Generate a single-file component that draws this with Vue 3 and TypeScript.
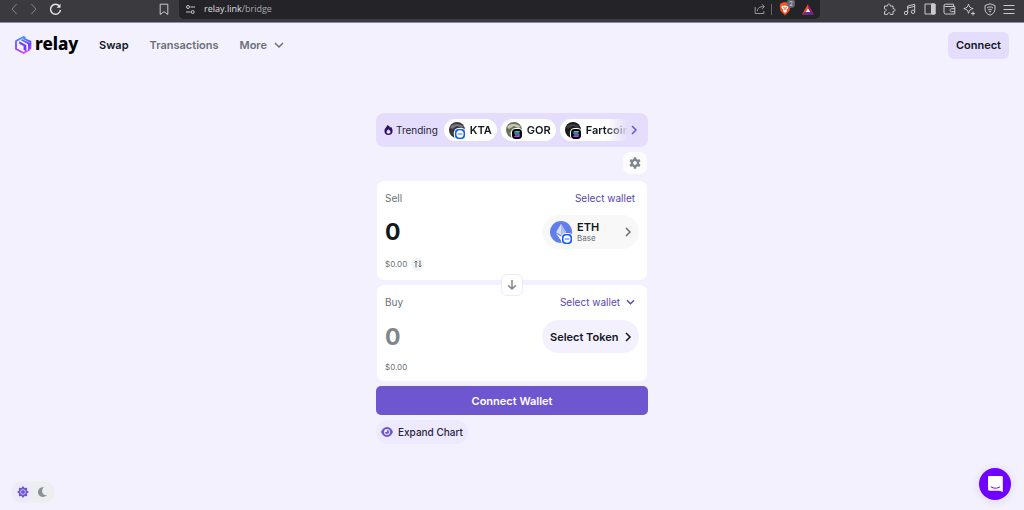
<script setup lang="ts">
import { ref } from 'vue'

interface Token {
  name: string
  chain: 'base' | 'solana'
  shade: string
  accent: string
}

const tokens: Token[] = [
  { name: 'KTA', chain: 'base', shade: '#37373c', accent: '#77777c' },
  { name: 'GOR', chain: 'solana', shade: '#687258', accent: '#c5c8b8' },
  { name: 'Fartcoin', chain: 'solana', shade: '#18191c', accent: '#3b3c42' },
]

const sellAmount = ref('0')
const buyAmount = ref('0')
const dark = ref(false)
</script>

<template>
  <div class="page">
    <div class="browser">
      <div class="tools-left">
        <button class="plain dim" aria-label="Back"><svg width="8" height="12" viewBox="0 0 8 12"><path d="M6.500 1 2 6l4.500 5" /></svg></button>
        <button class="plain dim" aria-label="Forward"><svg width="8" height="12" viewBox="0 0 8 12"><path d="M1.500 1 6 6l-4.500 5" /></svg></button>
        <button class="plain reload" aria-label="Reload"><svg width="13" height="13" viewBox="0 0 13 13"><path d="M10.500 3.200A5 5 0 1 0 11.500 7" stroke-width="1.500" /><path d="M11.500.8v4H7.600z" fill="currentColor" stroke="none" /></svg></button>
        <button class="plain bookmark" aria-label="Bookmark"><svg width="10" height="13" viewBox="0 0 10 13"><path d="M1.200 1.200h7.600v10.300L5 8.600l-3.800 2.900z" /></svg></button>
      </div>
      <div class="address">
        <svg class="tune" width="11" height="11" viewBox="0 0 11 11"><circle cx="3" cy="3" r="1.500" /><path d="M5.500 3H10M1 8h4.500" /><circle cx="7.700" cy="8" r="1.500" /></svg>
        <span class="url">relay.link<span>/bridge</span></span>
        <div class="address-actions">
          <button class="plain soft" aria-label="Share"><svg width="12" height="12" viewBox="0 0 12 12"><path d="M1.200 4v6.500h8.600V8M3.500 8C3.500 5 5.500 3.600 10 3.600M7.800 1.300l2.700 2.300-2.700 2.300" /></svg></button>
          <i class="divider"></i>
          <button class="plain shield" aria-label="Shields">
            <svg width="12" height="14" viewBox="0 0 12 14"><path d="m3 1 1-.8h4L9 1l1.400.3.8 2-.5 5.200L6 13.500 1.300 8.500l-.5-5.200.8-2z" fill="#f4511e" stroke="none" /><path d="m3 3.500 1.500.4L6 3.500l1.500.4L9 3.500l.6 1.800L7.700 8l.2 1.200L6 11l-1.900-1.800L4.300 8 2.400 5.300z" fill="#fff" stroke="none" /><path d="m4 5 1.400.6L5.200 8M8 5l-1.400.6L6.800 8" stroke="#f4511e" stroke-width=".8" /></svg>
            <b>2</b>
          </button>
          <button class="plain" aria-label="Rewards"><svg width="12" height="11" viewBox="0 0 12 11"><path d="M6 0 0 10.500h6z" fill="#ff4724" stroke="none" /><path d="m6 0 6 10.500H6z" fill="#9e1f63" stroke="none" /><path d="M0 10.500h12L9 7.800H3z" fill="#662d91" stroke="none" /><path d="M6 4.300 3.800 8h4.400z" fill="#fff" stroke="none" /></svg></button>
        </div>
      </div>
      <div class="tools-right">
        <button class="plain" aria-label="Extensions"><svg width="13" height="13" viewBox="0 0 13 13"><path d="M1.500 3h3c-.5-2.600 3.200-2.600 2.700 0H10v2.700c2.700-.5 2.700 3.200 0 2.700v3H7.200c.3-2.200-3-2.200-2.700 0h-3V8.500c2.200.3 2.200-3 0-2.700z" /></svg></button>
        <button class="plain" aria-label="Music"><svg width="13" height="13" viewBox="0 0 13 13"><path d="M4.700 10V3l7-1.700v7M4.700 5l7-1.700" /><circle cx="3" cy="10" r="1.700" /><circle cx="10" cy="8.800" r="1.700" /></svg></button>
        <button class="plain" aria-label="Sidebar"><svg width="12" height="12" viewBox="0 0 12 12"><path d="M1 1h10v10H1z" /><path d="M7.500 1H11v10H7.500z" fill="currentColor" /></svg></button>
        <button class="plain" aria-label="Browser wallet"><svg width="13" height="12" viewBox="0 0 13 12"><path d="M10.500 3.500V1.200H2.200C.8 1.200.8 3.500 2.200 3.500h9.600V11H2.200L1 10V2.500M12 5.700H8.500c-2 0-2 3 0 3H12" /></svg></button>
        <button class="plain" aria-label="Assistant"><svg width="13" height="13" viewBox="0 0 13 13"><path d="M5.500 1C6.200 4 7 4.800 10.200 5.600 7 6.400 6.200 7.200 5.500 10.300 4.800 7.200 4 6.400.8 5.600 4 4.800 4.800 4 5.500 1zM10 8.500v4M8 10.500h4" /></svg></button>
        <button class="plain" aria-label="VPN"><svg width="12" height="13" viewBox="0 0 12 13"><path d="m6 .8 5 1.700v3.700c0 2.800-2 4.800-5 6-3-1.200-5-3.200-5-6V2.500zM3 5c2-1.500 4-1.500 6 0M4.200 6.900c1.200-.9 2.400-.9 3.600 0" /><circle cx="6" cy="8.500" r=".6" /></svg></button>
        <button class="plain" aria-label="Menu"><svg width="12" height="11" viewBox="0 0 12 11"><path d="M.5 1.500h11M.5 5.500h11M.5 9.500h11" /></svg></button>
      </div>
    </div>

    <header>
      <a class="logo" href="#">
        <svg width="17" height="18" viewBox="0 0 17 18">
          <defs><linearGradient id="brand" gradientUnits="userSpaceOnUse" x1="5" y1="0" x2="8" y2="18"><stop offset="0" stop-color="#3fa2ff" /><stop offset=".5" stop-color="#643dff" /><stop offset="1" stop-color="#ee3dff" /></linearGradient></defs>
          <path d="M10.500 1.900 8.500 1 1 5v8l7.500 4 6.500-3.700" fill="none" stroke="url(#brand)" stroke-width="1.700" />
          <path d="M9 1.700 16.300 5v7.800L13 14.500V8.200L5.800 4.300z" fill="url(#brand)" />
          <path d="m4.200 5.300 7.200 3.900v6L8.600 13.700V10L4.200 7.700z" fill="#7138ff" />
          <path d="m5 4.600 7.200 3.900v6.800M7.500 3.100l7.200 3.600" fill="none" stroke="#f4f1ff" stroke-width=".6" />
        </svg>
        <span>relay</span>
      </a>
      <nav>
        <a class="active" href="#">Swap</a>
        <a href="#">Transactions</a>
        <button class="more">More <svg width="10" height="6" viewBox="0 0 10 6"><path d="m1 1 4 4 4-4" /></svg></button>
      </nav>
      <button class="connect">Connect</button>
    </header>

    <main>
      <section class="trending" aria-label="Trending tokens">
        <span class="trend-label"><svg width="9" height="10" viewBox="0 0 9 11"><path d="M3.200 0c2 .9 2.800 1.900 3.100 3L7.200 2C8.400 3.700 9 5 9 6.500 9 9.200 7 11 4.500 11S0 9.200 0 6.500C0 4 2.300 2.700 3.200 0z" fill="#2e1065" /><path d="M4 4.700c2 1 2.700 2 2.700 3 0 2.400-4.400 2.400-4.400 0 0-1.200 1.100-1.500 1.700-3z" fill="#e4ddfb" /></svg>Trending</span>
        <div class="tokens">
          <button v-for="token in tokens" :key="token.name" class="token">
            <span class="coin">
              <svg width="16" height="16" viewBox="0 0 16 16"><circle cx="8" cy="8" r="8" :fill="token.shade" /><path d="M1 5c3-4 10-4 14 0l-3 1-4-2-5 3z" :fill="token.accent" /><path d="M3 11c3-3 7-2 10 1l-2 3H6z" :fill="token.accent" opacity=".55" /></svg>
              <svg class="chain" width="10" height="10" viewBox="0 0 11 11">
                <template v-if="token.chain === 'base'"><rect width="11" height="11" rx="2.500" fill="#0b5cff" /><circle cx="5.500" cy="5.500" r="4" fill="#fff" /><path d="M3 5.500h5" stroke="#0b5cff" /></template>
                <template v-else><rect width="11" height="11" rx="2.500" fill="#050508" /><path d="M3.300 2.300H9L8 4H2.300z" fill="#35c9a4" /><path d="M2.300 4.700H8l1 1.600H3.300z" fill="#6789e8" /><path d="M3.300 7H9L8 8.700H2.300z" fill="#b04bf0" /></template>
              </svg>
            </span>{{ token.name }}
          </button>
        </div>
        <button class="next" aria-label="More trending tokens"><svg width="6" height="10" viewBox="0 0 6 10"><path d="m1 1 4 4-4 4" /></svg></button>
      </section>

      <button class="settings" aria-label="Settings"><svg width="12" height="12" viewBox="-6 -6 12 12"><circle r="3.100" fill="none" stroke="#7e868c" stroke-width="2.400" /><path d="M0-5.700v2M0 5.700v-2M-4.900-2.850l1.700 1M4.900 2.850l-1.700-1M4.900-2.850l-1.700 1M-4.900 2.850l1.700-1" stroke="#7e868c" stroke-width="2.600" /></svg></button>

      <section class="card sell">
        <div class="row caption"><label for="sell">Sell</label><button class="wallet">Select wallet</button></div>
        <div class="row amount">
          <input id="sell" v-model="sellAmount" inputmode="decimal" />
          <button class="pill eth">
            <span class="coin large">
              <svg width="22" height="22" viewBox="0 0 22 22"><circle cx="11" cy="11" r="11" fill="#627eea" /><path d="m11 3 5 8.300-5 3-5-3z" fill="#d7defa" /><path d="m11 3 5 8.300-5 3zM11 9l5 2.300-5 3z" fill="#aebcf5" /><path d="m6 12.400 5 3 5-3-5 7z" fill="#f4f6ff" /></svg>
              <svg class="chain" width="10" height="10" viewBox="0 0 11 11"><rect width="11" height="11" rx="2.500" fill="#0b5cff" /><circle cx="5.500" cy="5.500" r="4" fill="#fff" /><path d="M3 5.500h5" stroke="#0b5cff" /></svg>
            </span>
            <span class="coin-name">ETH<small>Base</small></span>
            <svg class="chevron" width="6" height="10" viewBox="0 0 6 10"><path d="m1 1 4 4-4 4" /></svg>
          </button>
        </div>
        <div class="row value">$0.00 <button class="switch" aria-label="Switch input unit"><svg width="8" height="8" viewBox="0 0 8 8"><path d="M2 7.500V1M.5 2.500 2 1l1.500 1.500M6 .5V7M4.500 5.500 6 7l1.500-1.500" /></svg></button></div>
      </section>

      <section class="card buy">
        <button class="swap" aria-label="Reverse tokens"><svg width="10" height="10" viewBox="0 0 10 10"><path d="M5 0v9M1.200 5.300 5 9l3.800-3.700" /></svg></button>
        <div class="row caption"><label for="buy">Buy</label><button class="wallet">Select wallet <svg width="9" height="6" viewBox="0 0 10 6"><path d="m1 1 4 4 4-4" /></svg></button></div>
        <div class="row amount">
          <input id="buy" v-model="buyAmount" inputmode="decimal" />
          <button class="pill select">Select Token <svg class="chevron" width="6" height="10" viewBox="0 0 6 10"><path d="m1 1 4 4-4 4" /></svg></button>
        </div>
        <div class="row value">$0.00</div>
      </section>

      <button class="submit">Connect Wallet</button>
      <button class="expand"><svg width="12" height="10" viewBox="0 0 12 10"><path d="M6 0c3 0 5 2.500 6 5-1 2.500-3 5-6 5S1 7.500 0 5c1-2.500 3-5 6-5z" fill="#6e56cf" /><circle cx="6" cy="5" r="3" fill="#ede9fe" /><path d="M6 3a2 2 0 1 1-2 2h2z" fill="#6e56cf" /></svg>Expand Chart</button>
    </main>

    <div class="theme">
      <button :class="{ chosen: !dark }" aria-label="Light theme" @click="dark = false"><svg width="12" height="12" viewBox="-6 -6 12 12"><path d="M0-6 1.600-3.900 4.200-4.200 3.900-1.600 6 0 3.900 1.600 4.200 4.200 1.600 3.900 0 6-1.600 3.900-4.200 4.200-3.900 1.600-6 0-3.900-1.600-4.200-4.200-1.600-3.900z" fill="#6e56cf" /><circle r="2.400" fill="none" stroke="#d4cafe" stroke-width=".9" /></svg></button>
      <button :class="{ chosen: dark }" aria-label="Dark theme" @click="dark = true"><svg width="10" height="10" viewBox="0 0 10 10"><path d="M6 0C1.500 0 0 3 0 5c0 4.800 5.500 6.500 9 3.200C4 8.600 2.500 3.500 6 0z" fill="#889096" /></svg></button>
    </div>
    <button class="chat" aria-label="Open chat"><svg width="15" height="17" viewBox="0 0 15 17"><path d="M1.500 0h12c.8 0 1.300.5 1.300 1.300V16l-3.300-1.300h-10C.6 14.700 0 14.100 0 13.300v-12C0 .5.600 0 1.500 0z" fill="#fff" /><path d="M2.700 10.700c3 2 6.500 2 9.500 0" fill="none" stroke="#7000ff" /></svg></button>
  </div>
</template>

<style>
body { margin: 0; background: #f4f1ff; }
</style>

<style scoped>
* { box-sizing: border-box; }
.page { min-height: 100vh; background: #f4f1ff; color: #11181c; font: 12px/16px Inter, sans-serif; }
button, input { font: inherit; color: inherit; border: 0; padding: 0; margin: 0; background: none; }
a { color: inherit; text-decoration: none; }
svg { display: block; flex: none; overflow: visible; }
button { display: flex; align-items: center; justify-content: center; white-space: nowrap; }
.browser { display: flex; height: 23px; background: #3b3a3f; border-bottom: 1px solid #8e8c96; color: #c9c8cd; }
.browser svg, .more svg, .next svg, .wallet svg, .chevron, .switch svg, .swap svg { fill: none; stroke: currentColor; }
.tools-left { display: flex; align-items: center; gap: 10px; width: 179px; height: 18px; padding: 0 10px 0 9px; }
.plain.dim { width: 10px; color: #88878d; }
.plain.reload { color: #e4e3e8; }
.plain.soft { color: #99989e; }
.plain.bookmark { margin-left: auto; }
.address { display: flex; align-items: center; flex: 1; height: 19px; padding: 0 6px 1px; background: #242328; border-radius: 0 0 5px 5px; }
.url { margin-left: 8px; color: #e0dfe4; font: 9px/16px "Open Sans", sans-serif; }
.url span { color: #aaa9af; }
.address-actions { display: flex; align-items: center; gap: 5px; margin-left: auto; }
.divider { width: 1px; height: 11px; background: #67666c; }
.plain.shield { position: relative; margin-right: 6px; margin-left: 2px; }
.shield b { position: absolute; top: -3px; right: -4px; width: 8px; height: 9px; border-radius: 4px; background: #626573; color: #ddd; font: 6px/9px Inter, sans-serif; }
.tools-right { display: flex; align-items: center; justify-content: space-between; width: 204px; height: 18px; padding: 0 9px 0 63px; }
header { display: flex; align-items: center; height: 44px; padding: 0 15px; font-size: 11px; font-weight: 600; }
.logo { display: flex; align-items: center; gap: 3px; width: 84px; color: #000; font: 800 17px/24px "Noto Sans", sans-serif; }
.logo span { padding-bottom: 2px; }
nav { display: flex; align-items: center; gap: 21px; color: #687076; }
nav .active { color: #11181c; }
.more { gap: 7px; }
.more svg { stroke-width: 1.500; }
.connect { margin-left: auto; height: 27px; padding: 0 8px; border-radius: 6px; background: #e4ddfb; font-weight: 600; }
main { display: flex; flex-direction: column; width: 100%; max-width: 272px; margin: 46px auto 0; }
.trending { display: flex; align-items: center; height: 34px; padding: 0 8px; border-radius: 8px; background: #e4ddfb; }
.trend-label { display: flex; align-items: center; gap: 3px; margin-right: 6px; font-size: 10px; color: #27243a; }
.tokens { display: flex; flex: 1; gap: 4px; min-width: 0; overflow: hidden; mask-image: linear-gradient(to right, #000 88%, transparent); }
.token { flex: none; gap: 5px; height: 22px; padding: 0 5px; border-radius: 11px; background: #fff; font-size: 11px; font-weight: 600; }
.coin { position: relative; width: 16px; height: 16px; }
.chain { position: absolute; right: 0; bottom: -1px; outline: 1px solid #fff; border-radius: 3px; }
.next { width: 12px; height: 22px; color: #6e56cf; }
.next svg, .chevron { stroke-width: 1.500; }
.settings { align-self: flex-end; width: 24px; height: 22px; margin: 5px 1px 7px 0; border-radius: 7px; background: #fcfcfd; }
.card { position: relative; border-radius: 7px; background: #fff; margin: 0 1px; padding: 8px; }
.row { display: flex; align-items: center; justify-content: space-between; }
.caption { height: 18px; color: #687076; font-size: 10px; padding-right: 4px; }
.wallet { gap: 6px; color: #5746af; }
.wallet svg { stroke-width: 1.500; }
.amount { margin-top: 8px; }
.amount input { flex: 1; min-width: 0; height: 30px; font-size: 23px; font-weight: 700; line-height: 30px; outline-offset: 2px; }
.buy .amount input { color: #7e868c; }
.pill { width: 97px; height: 34px; border-radius: 17px; padding: 0 8px; background: #f8f8f8; }
.large { width: 22px; height: 22px; }
.coin-name { margin-left: 5px; text-align: left; font-size: 11px; font-weight: 600; line-height: 12px; }
.coin-name small { display: block; font-size: 8px; font-weight: 400; line-height: 10px; color: #687076; }
.chevron { margin-left: auto; color: #687076; }
.value { justify-content: flex-start; gap: 4px; height: 14px; margin-top: 8px; color: #687076; font-size: 8px; line-height: 14px; }
.switch { width: 13px; height: 13px; border-radius: 7px; background: #f1f3f5; }
.sell { padding-bottom: 9px; }
.buy { margin-top: 5px; padding-bottom: 7px; }
.buy .amount { margin-top: 9px; }
.buy .value { margin-top: 7px; }
.select { height: 33px; background: #f4f1ff; font-size: 11px; font-weight: 600; }
.select .chevron { color: #11181c; }
.swap { position: absolute; left: 50%; top: -11px; transform: translateX(-50%); width: 22px; height: 22px; border: 1px solid #ede9fe; border-radius: 6px; background: #fff; color: #7e868c; }
.swap svg { stroke-width: 1.500; }
.submit { height: 29px; margin-top: 5px; border-radius: 5px; background: #6e56cf; color: #fff; font-size: 11px; font-weight: 600; }
.expand { align-self: flex-start; gap: 5px; height: 24px; margin-top: 5px; padding: 0 5px; border-radius: 12px; background: #ede9fe; color: #27243a; font-size: 10px; font-weight: 500; }
.theme { position: fixed; left: 11px; bottom: 7px; display: flex; height: 22px; padding: 1px 2px; border-radius: 11px; background: #eceef0; }
.theme button { width: 20px; height: 20px; border-radius: 10px; }
.theme .chosen { background: #ede9fe; }
.chat { position: fixed; right: 13px; bottom: 10px; width: 32px; height: 32px; border-radius: 50%; background: #7000ff; box-shadow: 0 1px 8px #0000001f; }
</style>
